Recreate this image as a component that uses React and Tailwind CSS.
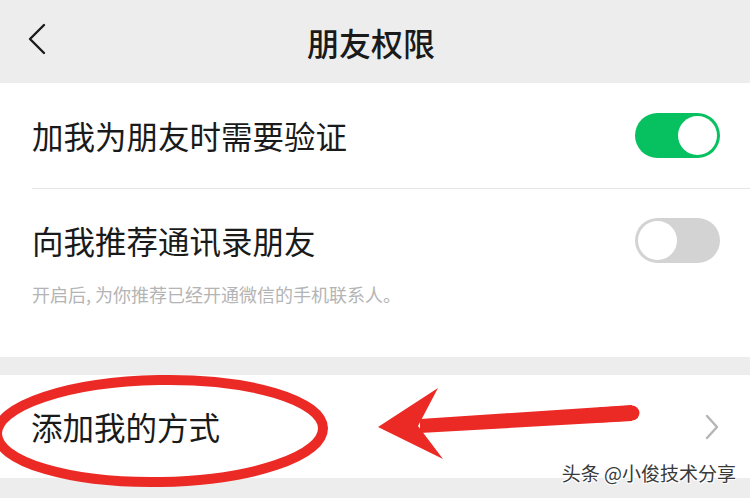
import React from "react";

const font = { fontFamily: '"Noto Sans CJK SC", "Noto Sans", sans-serif' };

const Toggle = ({ on }) => (
  <div
    className={`relative h-[45px] w-[85px] shrink-0 rounded-full ${
      on ? "bg-[#07c160]" : "bg-[#d3d3d3]"
    }`}
  >
    <div
      className={`absolute top-[3px] h-[39px] w-[39px] rounded-full bg-white ${
        on ? "right-[3px]" : "left-[3px]"
      }`}
    />
  </div>
);

const Annotations = () => (
  <svg
    className="pointer-events-none absolute inset-0"
    width="750"
    height="498"
    viewBox="0 0 750 498"
  >
    <ellipse
      cx="160"
      cy="431"
      rx="163"
      ry="51"
      fill="none"
      stroke="#ec2a25"
      strokeWidth="10"
      transform="rotate(-1 160 431)"
    />
    <path d="M632 405 L420 419 L420 433 L632 421 Z" fill="#ec2a25" />
    <line
      x1="632"
      y1="413"
      x2="600"
      y2="415"
      stroke="#ec2a25"
      strokeWidth="15"
      strokeLinecap="round"
    />
    <path d="M378 427 L438 388 L418 426 L443 459 Z" fill="#ec2a25" />
  </svg>
);

const App = () => {
  return (
    <div
      className="relative h-[498px] w-[750px] overflow-hidden bg-[#ededed] text-[#1a1a1a]"
      style={font}
    >
      <header className="relative flex h-[83px] items-center justify-center">
        <svg
          className="absolute left-[27px] top-[23px]"
          width="20"
          height="32"
          viewBox="0 0 20 32"
        >
          <path
            d="M17 2 L3 16 L17 30"
            fill="none"
            stroke="#1a1a1a"
            strokeWidth="2.4"
            strokeLinecap="round"
            strokeLinejoin="round"
          />
        </svg>
        <h1 className="mr-[8px] text-[32px] font-medium leading-none">朋友权限</h1>
      </header>

      <section className="bg-white">
        <div className="flex h-[105px] items-center justify-between pl-[32px] pr-[30px]">
          <span className="text-[31.5px] leading-none">加我为朋友时需要验证</span>
          <Toggle on />
        </div>
        <div className="ml-[32px] h-px bg-[#e6e6e6]" />
        <div className="h-[168px] pl-[32px] pr-[30px] pt-[29px]">
          <div className="flex items-center justify-between">
            <span className="text-[31.5px] leading-none">向我推荐通讯录朋友</span>
            <Toggle />
          </div>
          <p className="mt-[22px] text-[18px] leading-none text-[#b4b4b4]">
            开启后, 为你推荐已经开通微信的手机联系人。
          </p>
        </div>
      </section>

      <section className="mt-[18px] flex h-[103px] items-center justify-between bg-white pl-[31px] pr-[30px]">
        <span className="text-[31.5px] leading-none">添加我的方式</span>
        <svg width="16" height="26" viewBox="0 0 16 26">
          <path
            d="M3 2 L13 13 L3 24"
            fill="none"
            stroke="#b5b5b5"
            strokeWidth="2.4"
            strokeLinecap="round"
            strokeLinejoin="round"
          />
        </svg>
      </section>

      <Annotations />

      <div
        className="absolute right-[14px] top-[463px] text-[19px] leading-none text-[#3a3a3a]"
        style={{
          textShadow:
            "1px 1px 0 #fff, -1px -1px 0 #fff, 1px -1px 0 #fff, -1px 1px 0 #fff",
        }}
      >
        头条 @小俊技术分享
      </div>
    </div>
  );
};

export default App;
